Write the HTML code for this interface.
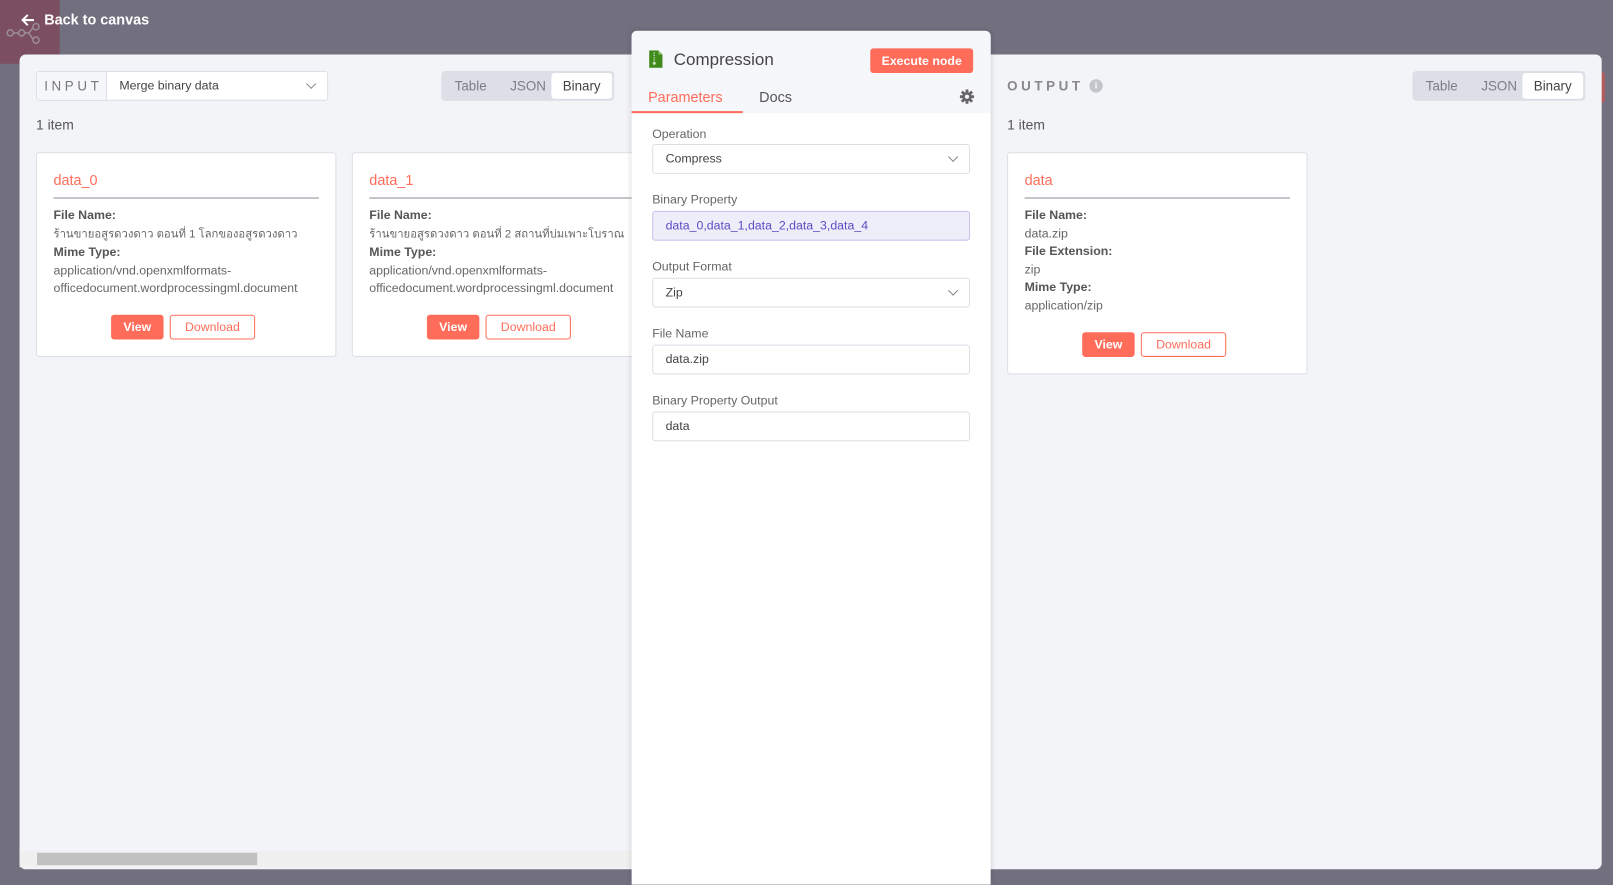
<!DOCTYPE html>
<html><head><meta charset="utf-8"><style>
html,body{margin:0;padding:0;width:1613px;height:882px;overflow:hidden;background:#72707f;font-family:"Liberation Sans","DejaVu Sans",sans-serif;}
#w{position:absolute;left:0;top:0;width:1568px;height:858px;transform:scale(1.02870);transform-origin:0 0;}
.a{position:absolute;}
.main{left:19px;top:53px;width:1538px;height:792px;background:#f3f4f8;border-radius:6px;}
.tog{background:#dcdfe6;border-radius:4px;height:29px;font-size:13px;color:#7d7d87;}
.tog span{position:absolute;top:7px;}
.tog .on{background:#fff;border-radius:3px;top:2px;height:25px;line-height:25px;color:#444;padding:0 11px;}
.card{background:#fff;border:1px solid #dcdfe6;border-radius:3px;}
.card h3{position:absolute;margin:0;left:16px;top:18px;font-size:14px;font-weight:normal;color:#ff6d5a;}
.card .hr{position:absolute;left:16px;right:16px;top:43px;height:1px;background:#8f8d99;}
.card .t{position:absolute;left:16px;top:52px;font-size:12px;line-height:17.5px;color:#666;white-space:nowrap;}
.card .t b{color:#555;font-weight:bold;}
.th{font-size:11px;}
.bv{position:absolute;height:24px;line-height:24px;background:#ff6d5a;color:#fff;font-size:12px;font-weight:bold;border-radius:3px;text-align:center;width:51px;}
.bd{position:absolute;height:22px;line-height:22px;border:1px solid #ff6d5a;color:#ff6d5a;font-size:12px;border-radius:3px;text-align:center;width:81px;background:#fff;}
.lbl{position:absolute;left:20px;font-size:12px;color:#666;}
.inp{position:absolute;left:20px;width:307px;height:27px;border:1px solid #dcdfe6;border-radius:3px;background:#fff;font-size:12px;color:#444;line-height:27px;text-indent:12px;}
.chev{position:absolute;right:12px;top:8px;width:6px;height:6px;border-right:1px solid #888;border-bottom:1px solid #888;transform:rotate(45deg);}
</style></head><body><div id="w">
<div class="a" style="left:0;top:0;width:58px;height:62px;background:#7b4f5f"></div>
<svg class="a" style="left:5px;top:22px" width="44" height="22"><g fill="none" stroke="#9a8a96" stroke-width="1.5"><circle cx="5" cy="10" r="3"/><circle cx="16" cy="10" r="3"/><circle cx="30" cy="4" r="3"/><circle cx="30" cy="17" r="3"/><path d="M8 10h5M19 10h4l4-5M23 10l4 6"/></g></svg>
<svg class="a" style="left:20px;top:13px" width="14" height="13"><path d="M13 6.5H2M7 1.5L2 6.5l5 5" fill="none" stroke="#fff" stroke-width="2"/></svg>
<div class="a" style="left:43px;top:11px;color:#fff;font-size:14px;font-weight:bold">Back to canvas</div>
<div class="a" style="left:1552px;top:70px;width:8px;height:30px;background:#b55a5a;border-radius:3px"></div>
<div class="a main"></div>
<div class="a" style="left:35px;top:69px;width:282px;height:27px;border:1px solid #dcdfe6;border-radius:3px;background:#fff">
<div class="a" style="left:0;top:0;width:67px;height:27px;background:#f6f7fa;border-right:1px solid #dcdfe6;font-size:13px;letter-spacing:3.5px;color:#777;line-height:27px;text-indent:7px">INPUT</div>
<div class="a" style="left:80px;top:6px;font-size:12px;color:#444">Merge binary data</div>
<div class="chev" style="top:8px"></div></div>
<div class="a tog" style="left:429px;top:69px;width:168px"><span style="left:13px">Table</span><span style="left:67px">JSON</span><span class="on" style="left:107px">Binary</span></div>
<div class="a" style="left:35px;top:114px;font-size:13.5px;color:#555">1 item</div>
<div class="a card" style="left:35px;top:148px;width:290px;height:197px"><h3>data_0</h3><div class="hr"></div>
<div class="t"><b>File Name:</b><br><span class="th">ร้านขายอสูรดวงดาว ตอนที่ 1 โลกของอสูรดวงดาว</span><br><b>Mime Type:</b><br>application/vnd.openxmlformats-<br>officedocument.wordprocessingml.document</div>
<div class="bv" style="left:72px;top:157px">View</div><div class="bd" style="left:129px;top:157px">Download</div></div>
<div class="a card" style="left:342px;top:148px;width:290px;height:197px"><h3>data_1</h3><div class="hr"></div>
<div class="t"><b>File Name:</b><br><span class="th">ร้านขายอสูรดวงดาว ตอนที่ 2 สถานที่บ่มเพาะโบราณ</span><br><b>Mime Type:</b><br>application/vnd.openxmlformats-<br>officedocument.wordprocessingml.document</div>
<div class="bv" style="left:72px;top:157px">View</div><div class="bd" style="left:129px;top:157px">Download</div></div>
<div class="a" style="left:19px;top:827px;width:595px;height:16px;background:#f0f0f0"></div>
<div class="a" style="left:36px;top:829px;width:214px;height:12px;background:#c1c1c1"></div>
<div class="a" style="left:979px;top:76px;font-size:13px;letter-spacing:3.5px;color:#888;font-weight:bold">OUTPUT</div>
<div class="a" style="left:1059px;top:77px;width:13px;height:13px;border-radius:50%;background:#c4c4cc;color:#fff;font-size:9px;text-align:center;line-height:13px;font-weight:bold">i</div>
<div class="a tog" style="left:1373px;top:69px;width:168px"><span style="left:13px">Table</span><span style="left:67px">JSON</span><span class="on" style="left:107px">Binary</span></div>
<div class="a" style="left:979px;top:114px;font-size:13.5px;color:#555">1 item</div>
<div class="a card" style="left:979px;top:148px;width:290px;height:214px"><h3>data</h3><div class="hr"></div>
<div class="t"><b>File Name:</b><br>data.zip<br><b>File Extension:</b><br>zip<br><b>Mime Type:</b><br>application/zip</div>
<div class="bv" style="left:72px;top:174px">View</div><div class="bd" style="left:129px;top:174px">Download</div></div>
<div class="a" style="left:614px;top:30px;width:349px;height:830px;background:#fff;border-radius:5px 5px 0 0;box-shadow:0 0 6px rgba(0,0,0,.15)">
<div class="a" style="left:0;top:0;width:349px;height:80px;background:#f6f7fa;border-radius:5px 5px 0 0"></div>
<svg class="a" style="left:17px;top:19px" width="13" height="17"><path d="M0 0h9l4 4v13H0z" fill="#3f8a1a"/><path d="M9 0v4h4" fill="#8fc070"/><path d="M5 2v9" stroke="#cfe5bf" stroke-width="1.3" stroke-dasharray="1.3 1"/><circle cx="5" cy="12.5" r="1.5" fill="#cfe5bf"/></svg>
<div class="a" style="left:41px;top:19px;font-size:16.5px;color:#444">Compression</div>
<div class="a" style="left:232px;top:17px;width:100px;height:24px;line-height:24px;background:#ff6d5a;border-radius:3px;color:#fff;font-size:12px;text-align:center;font-weight:bold">Execute node</div>
<div class="a" style="left:16px;top:56px;font-size:14px;color:#ff6d5a">Parameters</div>
<div class="a" style="left:124px;top:56px;font-size:14px;color:#555">Docs</div>
<div class="a" style="left:0;top:78px;width:108px;height:2px;background:#ff6d5a"></div>
<svg class="a" style="left:319px;top:57px" width="14" height="14" viewBox="0 0 14 14"><g fill="#666"><circle cx="7" cy="7" r="4.5"/><rect x="5.6" y="0" width="2.8" height="14"/><rect x="0" y="5.6" width="14" height="2.8"/><rect x="5.6" y="0" width="2.8" height="14" transform="rotate(45 7 7)"/><rect x="5.6" y="0" width="2.8" height="14" transform="rotate(-45 7 7)"/></g><circle cx="7" cy="7" r="2" fill="#f6f7fa"/></svg>
<div class="lbl" style="top:93px">Operation</div>
<div class="inp" style="top:110px">Compress<div class="chev"></div></div>
<div class="lbl" style="top:157px">Binary Property</div>
<div class="inp" style="top:175px;background:#eeedfa;border-color:#c7c2ec;color:#5b4fc4">data_0,data_1,data_2,data_3,data_4</div>
<div class="lbl" style="top:222px">Output Format</div>
<div class="inp" style="top:240px">Zip<div class="chev"></div></div>
<div class="lbl" style="top:287px">File Name</div>
<div class="inp" style="top:305px">data.zip</div>
<div class="lbl" style="top:352px">Binary Property Output</div>
<div class="inp" style="top:370px">data</div>
</div>
</div></body></html>
